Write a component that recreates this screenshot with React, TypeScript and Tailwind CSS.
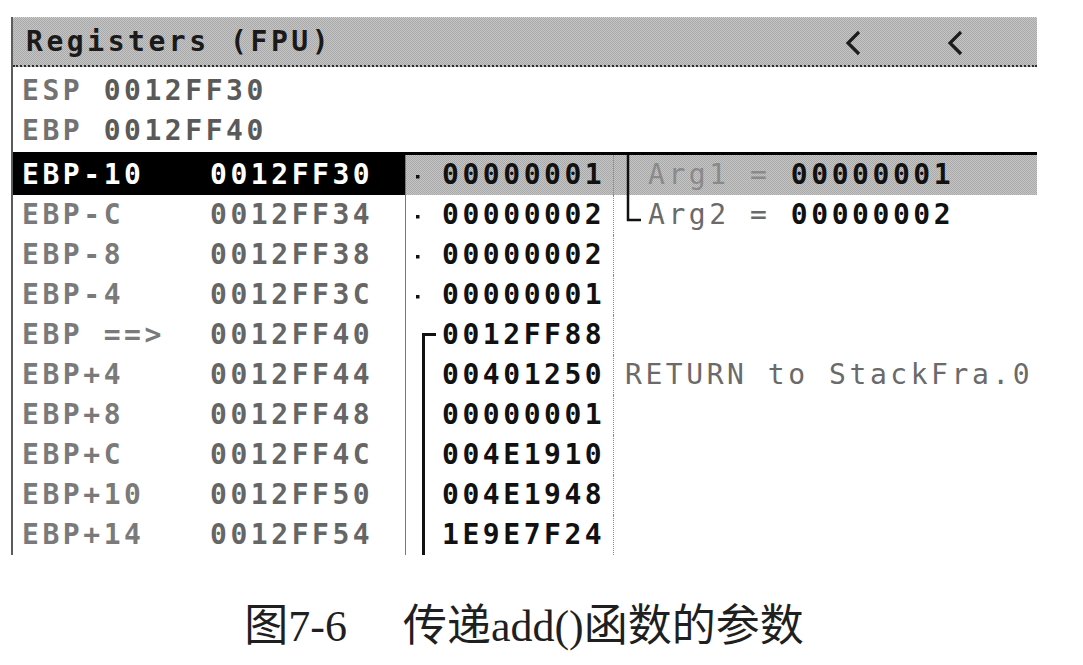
import React from 'react';

type Prefix = 'dot' | 'top' | 'line' | 'none';
type Bracket = 'line' | 'end' | 'none';

type Row = {
  off: string;
  addr: string;
  val: string;
  pre: Prefix;
  sel?: boolean;
  br?: Bracket;
  note?: string;
  noteVal?: string;
};

const rows: Row[] = [
  { off: 'EBP-10', addr: '0012FF30', val: '00000001', pre: 'dot', sel: true, br: 'line', note: 'Arg1 = ', noteVal: '00000001' },
  { off: 'EBP-C', addr: '0012FF34', val: '00000002', pre: 'dot', br: 'end', note: 'Arg2 = ', noteVal: '00000002' },
  { off: 'EBP-8', addr: '0012FF38', val: '00000002', pre: 'dot' },
  { off: 'EBP-4', addr: '0012FF3C', val: '00000001', pre: 'dot' },
  { off: 'EBP ==>', addr: '0012FF40', val: '0012FF88', pre: 'top' },
  { off: 'EBP+4', addr: '0012FF44', val: '00401250', pre: 'line', note: 'RETURN to StackFra.0' },
  { off: 'EBP+8', addr: '0012FF48', val: '00000001', pre: 'line' },
  { off: 'EBP+C', addr: '0012FF4C', val: '004E1910', pre: 'line' },
  { off: 'EBP+10', addr: '0012FF50', val: '004E1948', pre: 'line' },
  { off: 'EBP+14', addr: '0012FF54', val: '1E9E7F24', pre: 'line' },
];

const dither =
  'bg-[image:repeating-conic-gradient(#a8a8a8_0%_25%,#c6c6c6_0%_50%)] bg-[length:2px_2px]';

function PrefixMark({ kind }: { kind: Prefix }) {
  return (
    <svg width="28" height="40" viewBox="0 0 28 40" className="shrink-0">
      {kind === 'dot' && <rect x="2" y="20" width="3.5" height="3.5" fill="#111" />}
      {kind === 'top' && <path d="M9.5 40 V19.5 H22" stroke="#111" strokeWidth="3" fill="none" />}
      {kind === 'line' && <path d="M9.5 0 V40" stroke="#111" strokeWidth="3" fill="none" />}
    </svg>
  );
}

function BracketMark({ kind }: { kind: Bracket }) {
  return (
    <svg width="23" height="40" viewBox="0 0 23 40" className="shrink-0">
      {kind === 'line' && <path d="M3 0 V40" stroke="#111" strokeWidth="2.5" fill="none" />}
      {kind === 'end' && <path d="M3 0 V25 H16" stroke="#111" strokeWidth="2.5" fill="none" />}
    </svg>
  );
}

function Chevron() {
  return (
    <svg width="16" height="26" viewBox="0 0 16 26">
      <path d="M14 2 L3 13 L14 24" stroke="#1c1c1c" strokeWidth="3.2" fill="none" />
    </svg>
  );
}

export default function App() {
  return (
    <div className="min-h-screen bg-white pt-[17px] pl-[11px] font-['DejaVu_Sans_Mono',monospace] text-[28px] tracking-[3.55px]">
      <div className="w-[1026px] border-l-2 border-[#5c5c5c]">
        {/* header */}
        <div className={`h-[50px] flex items-center border-t border-dotted border-[#d8d8d8] border-b-2 border-b-[#2e2e2e] ${dither}`}>
          <span className="pl-[13px] font-bold text-[#1a1a1a]">Registers (FPU)</span>
          <div className="ml-auto flex items-center gap-[86px] pr-[74px] pt-[2px]">
            <Chevron />
            <Chevron />
          </div>
        </div>

        {/* registers */}
        <div className="pt-[4px] pb-[1px] font-bold text-[#727272]">
          <div className="h-[40px] flex items-center pl-[9px] whitespace-pre">
            ESP <span className="text-[#5a5a5a]">0012FF30</span>
          </div>
          <div className="h-[40px] flex items-center pl-[9px] whitespace-pre">
            EBP <span className="text-[#5a5a5a]">0012FF40</span>
          </div>
        </div>

        {/* stack */}
        <div className="border-t-[3px] border-black">
          {rows.map((r) => (
            <div key={r.off} className="h-[40px] flex">
              <div
                className={`w-[393px] shrink-0 flex items-center pl-[9px] border-r border-[#7a7a7a] font-bold whitespace-pre ${
                  r.sel ? 'bg-black text-white' : 'text-[#7a7a7a]'
                }`}
              >
                <span className="w-[188px] shrink-0">{r.off}</span>
                <span className={r.sel ? 'text-white' : 'text-[#666666]'}>{r.addr}</span>
              </div>
              <div
                className={`w-[208px] shrink-0 flex items-center pl-[8px] border-r border-dotted border-[#8a8a8a] font-bold text-[#111] ${
                  r.sel ? dither : ''
                }`}
              >
                <PrefixMark kind={r.pre} />
                <span>{r.val}</span>
              </div>
              <div className={`flex-1 flex items-center pl-[11px] whitespace-pre ${r.sel ? dither : ''}`}>
                {r.br && r.br !== 'none' && <BracketMark kind={r.br} />}
                {r.note && (
                  <span className={r.sel ? 'text-[#8a8a8a]' : 'text-[#6a6a6a]'}>{r.note}</span>
                )}
                {r.noteVal && <span className="font-bold text-[#111]">{r.noteVal}</span>}
              </div>
            </div>
          ))}
        </div>
      </div>

      {/* caption */}
      <div className="w-[1026px] mt-[46px] text-center text-[44px] leading-[52px] tracking-normal text-[#1f1f1f] font-['Liberation_Serif','Noto_Sans_CJK_SC',serif]">
        图7-6<span className="inline-block w-[56px]" />传递add()函数的参数
      </div>
    </div>
  );
}
